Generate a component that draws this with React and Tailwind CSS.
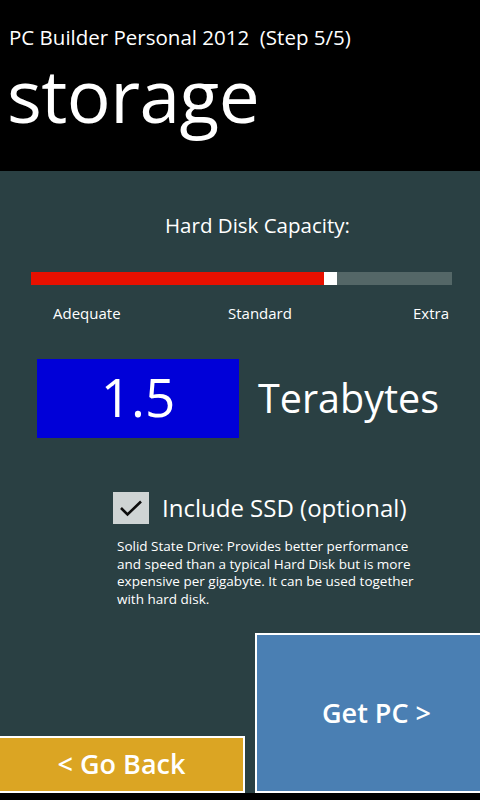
import { useState } from "react";

function Slider({ value }) {
    return (
        <div className="ml-[31px] w-[421px] h-[13px] flex bg-[#546767]">
            <div className="h-full bg-[#e81000]" style={{ width: `${value}%` }}></div>
            <div className="h-full w-[13px] bg-white"></div>
        </div>
    );
}

export default function App() {
    const [ssd, setSsd] = useState(true);

    return (
        <div
            className="w-[480px] h-[800px] flex flex-col bg-[#2a4043] text-white overflow-hidden"
            style={{ fontFamily: '"Open Sans", "Noto Sans", sans-serif' }}
        >
            <div className="bg-black h-[171px] shrink-0 pl-[9px] pt-[24px]">
                <p className="text-[20.5px] leading-[26px]">
                    PC Builder Personal 2012 &nbsp;(Step 5/5)
                </p>
                <h1 className="mt-[5px] text-[73px] leading-[80px] tracking-[-0.5px] -ml-[2px]">storage</h1>
            </div>

            <div className="flex-1 flex flex-col">
                <p className="pl-[165px] pt-[42px] text-[20.5px] leading-[24px]">Hard Disk Capacity:</p>

                <div className="mt-[35px]">
                    <Slider value={69.5} />
                </div>

                <div className="flex pl-[53px] pr-[31px] mt-[19px] text-[15px] leading-[18px]">
                    <span className="w-[175px]">Adequate</span>
                    <span>Standard</span>
                    <span className="ml-auto">Extra</span>
                </div>

                <div className="flex items-center mt-[37px] pl-[37px]">
                    <div className="w-[202px] h-[79px] bg-[#0000d8] flex items-center justify-center">
                        <span className="text-[53px] leading-none -mt-[4px]">1.5</span>
                    </div>
                    <span className="ml-[19px] text-[39.5px] leading-none">Terabytes</span>
                </div>

                <div className="flex items-center mt-[54px] pl-[113px]">
                    <button
                        onClick={() => setSsd(!ssd)}
                        className="w-[36px] h-[32px] bg-[#cfd4d4] flex items-center justify-center"
                    >
                        {ssd && (
                            <svg width="26" height="20" viewBox="0 0 26 20">
                                <path d="M3 10 L9.5 16.5 L23 3.5" fill="none" stroke="#0d0d0d" strokeWidth="2.6" />
                            </svg>
                        )}
                    </button>
                    <span className="ml-[13px] text-[24px] leading-none">Include SSD (optional)</span>
                </div>

                <p className="ml-[117px] w-[305px] mt-[14px] text-[13.5px] leading-[17.5px]">
                    Solid State Drive: Provides better performance and speed than a typical Hard Disk but is more expensive per gigabyte. It can be used together with hard disk.
                </p>

                <div className="mt-auto flex items-end justify-between">
                    <button className="w-[245px] h-[57px] bg-[#dba523] border-[2px] border-white border-l-0 text-[27px] font-semibold">
                        &lt; Go Back
                    </button>
                    <button className="w-[225px] h-[160px] bg-[#4a7fb3] border-[2px] border-white border-r-0 text-[27px] font-semibold pl-[16px]">
                        Get PC &gt;
                    </button>
                </div>
            </div>

            <div className="bg-black h-[7px] shrink-0"></div>
        </div>
    );
}
